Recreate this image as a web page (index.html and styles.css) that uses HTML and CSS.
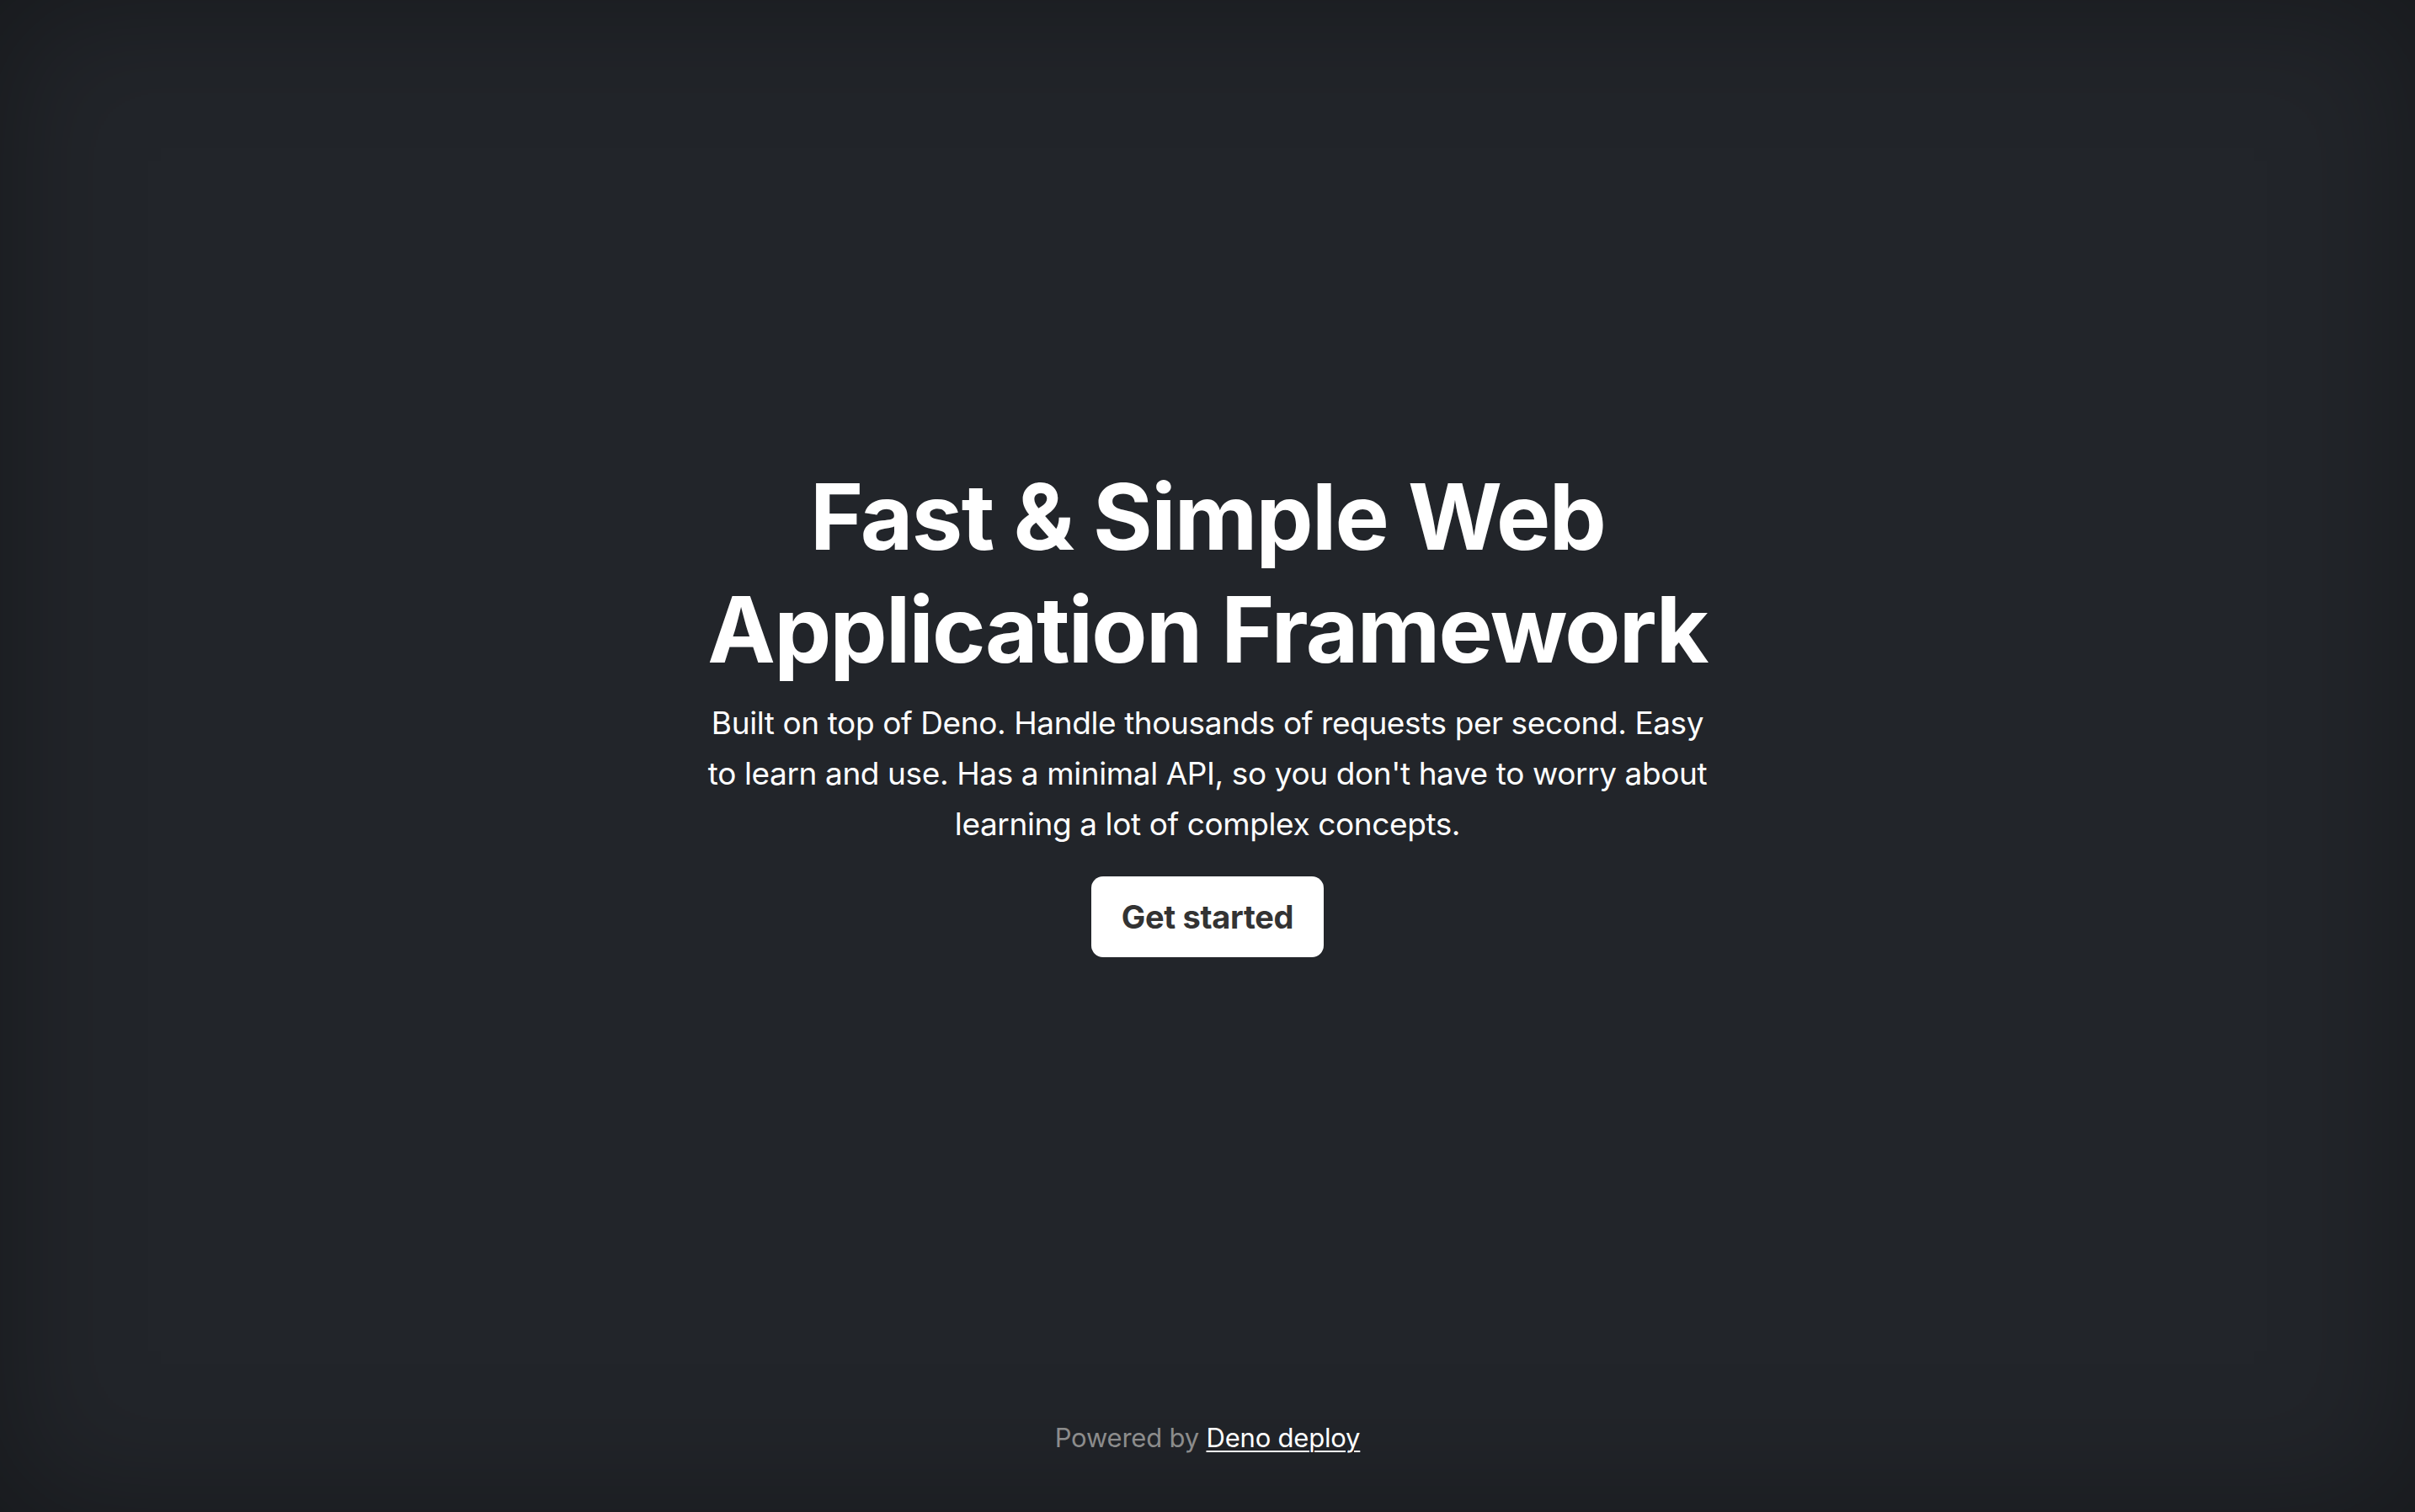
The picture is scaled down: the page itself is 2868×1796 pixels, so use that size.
FILE: index.html
```html
<!DOCTYPE html>
<html lang="en">
<head>
<meta charset="utf-8">
<title>Fast &amp; Simple Web Application Framework</title>
<link rel="stylesheet" href="styles.css">
</head>
<body>
<div class="page">
  <main class="hero">
    <div class="hero-inner">
      <h1 class="title">Fast &amp; Simple Web Application Framework</h1>
      <p class="lead">Built on top of Deno. Handle thousands of requests per second. Easy to learn and use. Has a minimal API, so you don't have to worry about learning a lot of complex concepts.</p>
      <a class="btn" href="#">Get started</a>
    </div>
  </main>
  <footer class="footer">
    <span class="muted">Powered by</span> <a class="footer-link" href="#">Deno deploy</a>
  </footer>
</div>
</body>
</html>
```

FILE: styles.css
```css
html, body {
  margin: 0;
  padding: 0;
  height: 100%;
}
body {
  background: #22252a;
  font-family: Inter, "Noto Sans", "Liberation Sans", sans-serif;
  color: #ffffff;
}
.page {
  min-height: 100vh;
  display: flex;
  flex-direction: column;
  box-shadow: inset 0 0 160px rgba(0, 0, 0, 0.35);
  box-sizing: border-box;
}
.hero {
  flex: 1;
  display: flex;
  align-items: center;
  justify-content: center;
  padding-bottom: 4px;
}
.hero-inner {
  width: 1200px;
  display: flex;
  flex-direction: column;
  align-items: center;
  text-align: center;
}
.title {
  margin: 0;
  font-size: 108px;
  line-height: 134px;
  font-weight: 700;
  letter-spacing: -1.7px;
}
.lead {
  margin: 14px 0 0;
  font-size: 37px;
  line-height: 60px;
  font-weight: 400;
  letter-spacing: -0.4px;
}
.btn {
  margin-top: 32px;
  background: #ffffff;
  color: #333333;
  font-size: 38px;
  font-weight: 700;
  line-height: 48px;
  padding: 24px 36px;
  border-radius: 14px;
  text-decoration: none;
  letter-spacing: -0.3px;
}
.footer {
  padding: 0 0 68px;
  text-align: center;
  font-size: 31px;
  line-height: 40px;
  letter-spacing: -0.2px;
}
.muted {
  color: #8c8c8c;
}
.footer-link {
  color: #ffffff;
  text-decoration: underline;
  text-underline-offset: 4px;
  text-decoration-thickness: 2px;
}
```
